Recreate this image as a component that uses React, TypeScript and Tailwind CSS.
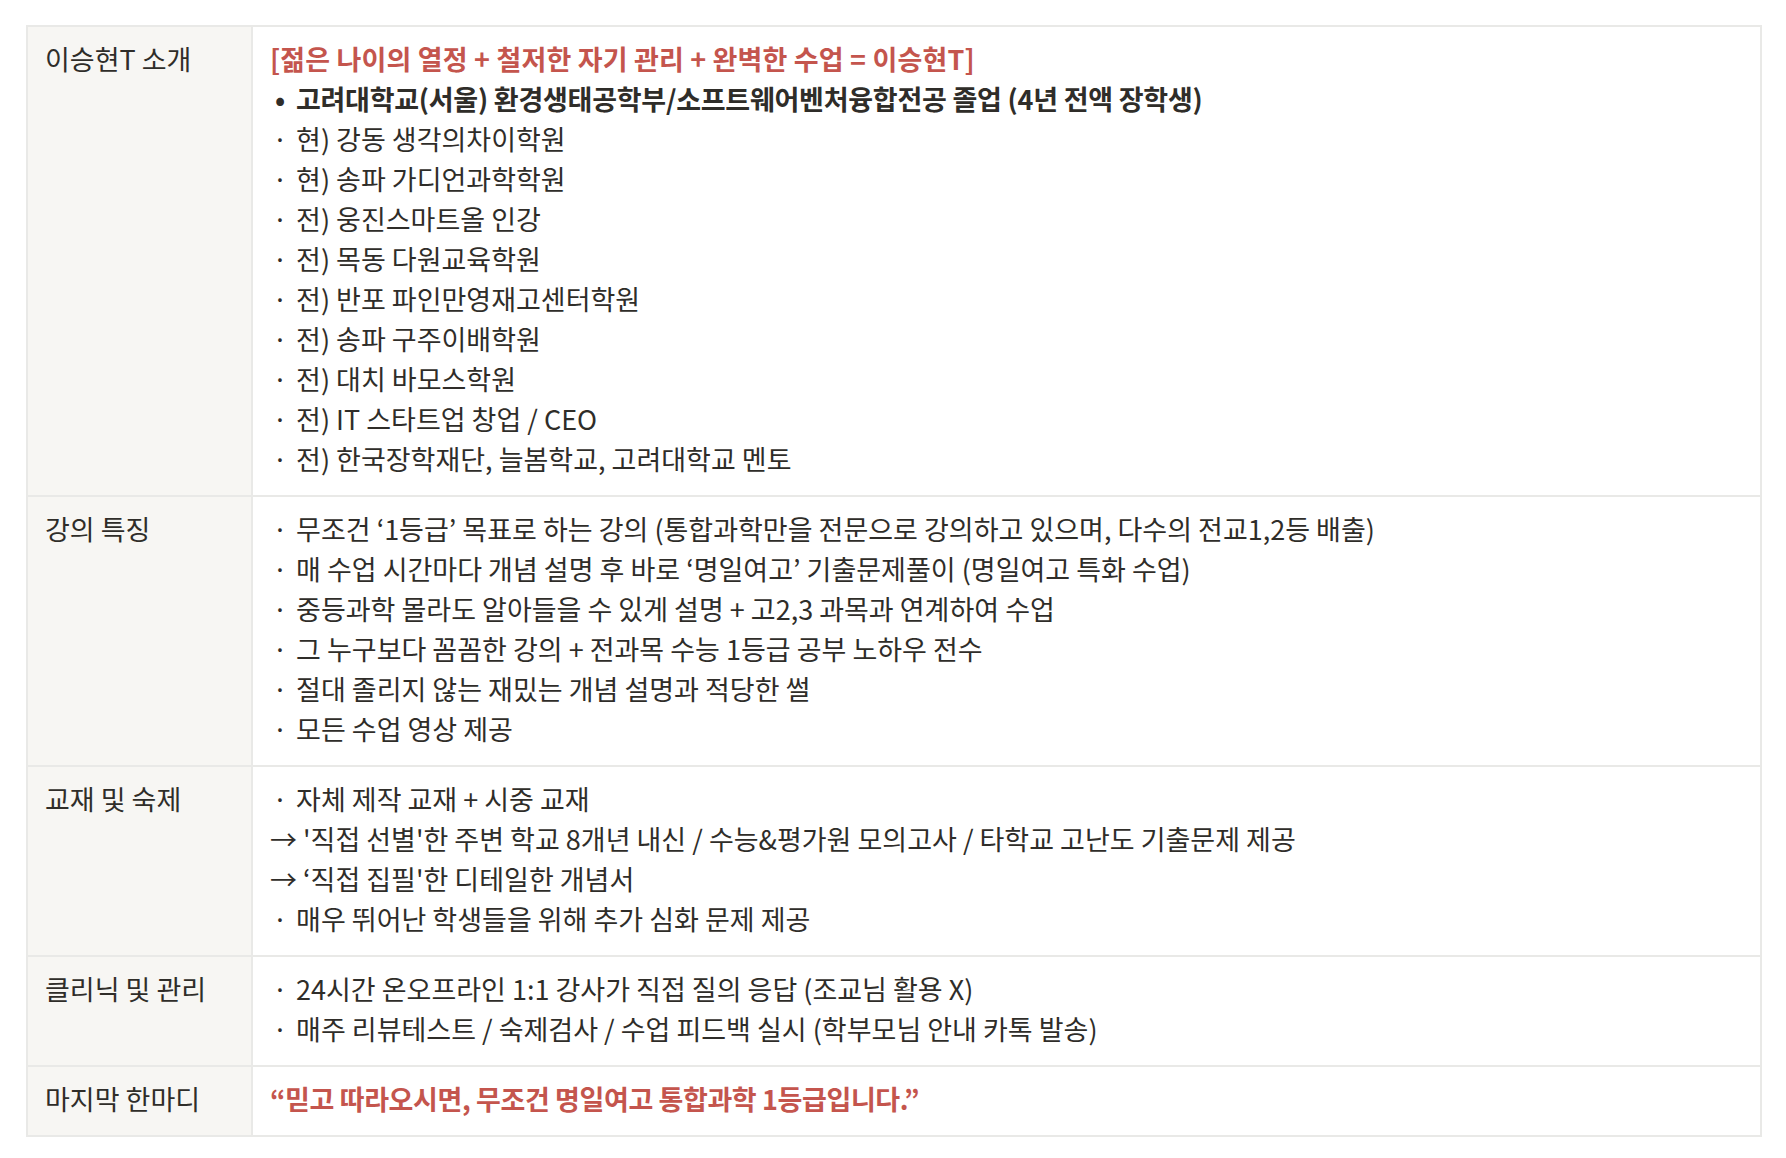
import React from "react";

const font = { fontFamily: '"Noto Sans CJK KR", "Noto Sans", sans-serif' };

type Row = { label: string; lines: React.ReactNode[] };

const B = ({ children }: { children: React.ReactNode }) => (
  <span className="inline-block w-[20px] text-center">{children}</span>
);

const Li = ({ t }: { t: string }) => (
  <div className="whitespace-nowrap">
    <B>·</B> {t}
  </div>
);

const rows: Row[] = [
  {
    label: "이승현T 소개",
    lines: [
      <div key="h" className="whitespace-nowrap font-bold tracking-[0.15px] text-[#C4554D]">
        [젊은 나이의 열정 + 철저한 자기 관리 + 완벽한 수업 = 이승현T]
      </div>,
      <div key="b" className="whitespace-nowrap font-bold tracking-[-0.25px]">
        <B>•</B> 고려대학교(서울) 환경생태공학부/소프트웨어벤처융합전공 졸업 (4년 전액 장학생)
      </div>,
      <Li key="1" t="현) 강동 생각의차이학원" />,
      <Li key="2" t="현) 송파 가디언과학학원" />,
      <Li key="3" t="전) 웅진스마트올 인강" />,
      <Li key="4" t="전) 목동 다원교육학원" />,
      <Li key="5" t="전) 반포 파인만영재고센터학원" />,
      <Li key="6" t="전) 송파 구주이배학원" />,
      <Li key="7" t="전) 대치 바모스학원" />,
      <Li key="8" t="전) IT 스타트업 창업 / CEO" />,
      <Li key="9" t="전) 한국장학재단, 늘봄학교, 고려대학교 멘토" />,
    ],
  },
  {
    label: "강의 특징",
    lines: [
      <Li key="1" t="무조건 ‘1등급’ 목표로 하는 강의 (통합과학만을 전문으로 강의하고 있으며, 다수의 전교1,2등 배출)" />,
      <Li key="2" t="매 수업 시간마다 개념 설명 후 바로 ‘명일여고’ 기출문제풀이 (명일여고 특화 수업)" />,
      <Li key="3" t="중등과학 몰라도 알아들을 수 있게 설명 + 고2,3 과목과 연계하여 수업" />,
      <Li key="4" t="그 누구보다 꼼꼼한 강의 + 전과목 수능 1등급 공부 노하우 전수" />,
      <Li key="5" t="절대 졸리지 않는 재밌는 개념 설명과 적당한 썰" />,
      <Li key="6" t="모든 수업 영상 제공" />,
    ],
  },
  {
    label: "교재 및 숙제",
    lines: [
      <Li key="1" t="자체 제작 교재 + 시중 교재" />,
      <div key="2" className="whitespace-nowrap">
        → '직접 선별'한 주변 학교 8개년 내신 / 수능&amp;평가원 모의고사 / 타학교 고난도 기출문제 제공
      </div>,
      <div key="3" className="whitespace-nowrap">→ ‘직접 집필'한 디테일한 개념서</div>,
      <Li key="4" t="매우 뛰어난 학생들을 위해 추가 심화 문제 제공" />,
    ],
  },
  {
    label: "클리닉 및 관리",
    lines: [
      <Li key="1" t="24시간 온오프라인 1:1 강사가 직접 질의 응답 (조교님 활용 X)" />,
      <Li key="2" t="매주 리뷰테스트 / 숙제검사 / 수업 피드백 실시 (학부모님 안내 카톡 발송)" />,
    ],
  },
  {
    label: "마지막 한마디",
    lines: [
      <div key="1" className="whitespace-nowrap font-bold tracking-[-0.4px] text-[#C4554D]">
        “믿고 따라오시면, 무조건 명일여고 통합과학 1등급입니다.”
      </div>,
    ],
  },
];

export default function App() {
  return (
    <div className="min-h-[1158px] w-full bg-white pt-[25px] pl-[26px]" style={font}>
      <table className="w-[1736px] border-collapse border-2 border-[#E9E9E7] text-[27px] leading-[40px] text-[#2F2D29]">
        <tbody>
          {rows.map((r) => (
            <tr key={r.label}>
              <td className="w-[225px] border-2 border-[#E9E9E7] bg-[#F7F6F3] px-[17px] pt-[12px] pb-[16px] align-top whitespace-nowrap">
                {r.label}
              </td>
              <td className="border-2 border-[#E9E9E7] bg-white px-[17px] pt-[12px] pb-[16px] align-top">
                {r.lines}
              </td>
            </tr>
          ))}
        </tbody>
      </table>
    </div>
  );
}
